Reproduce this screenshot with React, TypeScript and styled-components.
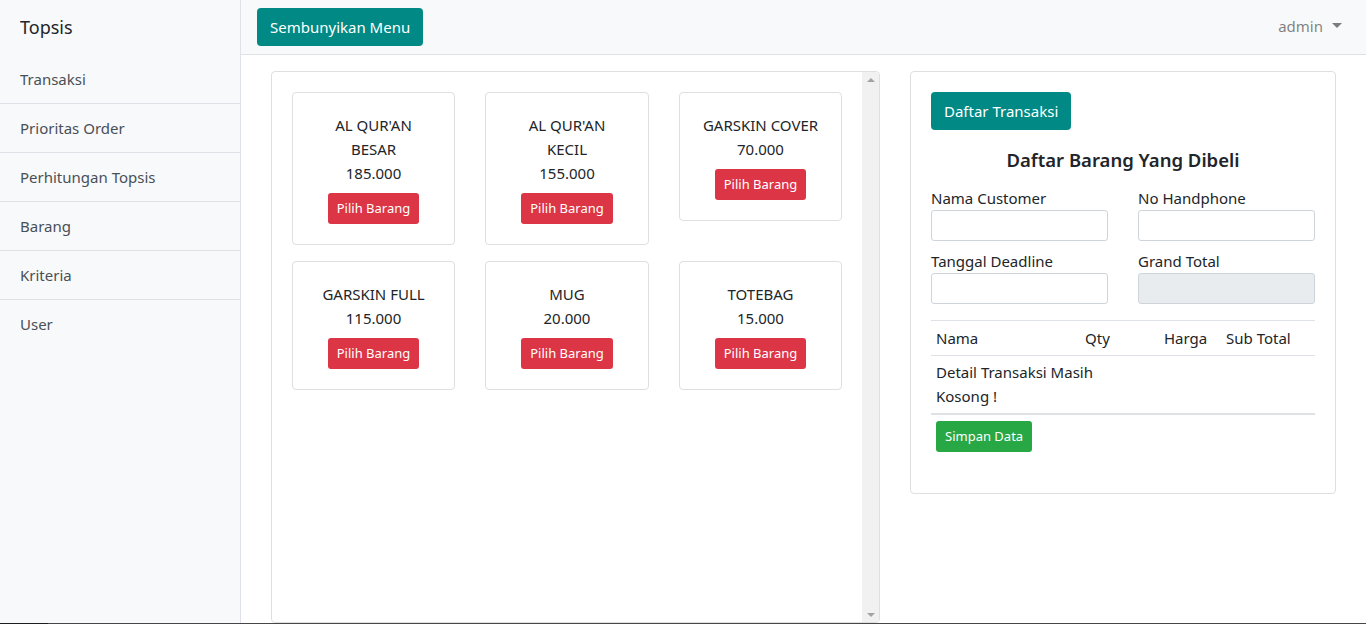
import React from "react";
import styled, { createGlobalStyle } from "styled-components";

const Global = createGlobalStyle`
  html, body { margin: 0; padding: 0; }
  body {
    font-family: "Noto Sans", "Open Sans", sans-serif;
    font-size: 15px;
    line-height: 1.5;
    color: #212529;
    background: #fff;
    overflow: hidden;
  }
  * { box-sizing: border-box; }
`;

const Page = styled.div`
  display: flex;
  flex-direction: column;
  height: 624px;
`;

const Wrapper = styled.div`
  display: flex;
  height: 623px;
`;

const BottomStrip = styled.div`
  height: 1px;
  background: linear-gradient(to right, #1e1e1e 0 48px, #474747 48px);
`;

const Sidebar = styled.aside`
  width: 241px;
  flex: none;
  background: #f8f9fa;
  border-right: 1px solid #dee2e6;
`;

const SidebarHeading = styled.div`
  height: 55px;
  padding: 14px 20px 0;
  font-size: 18px;
  line-height: 27px;
  color: #212529;
`;

const SideItem = styled.div<{ $last?: boolean }>`
  height: 49px;
  padding: 12px 20px;
  border-bottom: ${(p) => (p.$last ? "none" : "1px solid #dee2e6")};
  color: #495057;
  font-size: 15px;
  line-height: 24px;
`;

const Main = styled.div`
  flex: 1;
  display: flex;
  flex-direction: column;
  min-width: 0;
`;

const Navbar = styled.nav`
  height: 55px;
  flex: none;
  display: flex;
  align-items: center;
  justify-content: space-between;
  padding: 0 16px;
  background: #f8f9fa;
  border-bottom: 1px solid #dee2e6;
`;

const Btn = styled.button<{ $variant: "teal" | "red" | "green"; $small?: boolean }>`
  font-family: inherit;
  border: 1px solid transparent;
  border-radius: ${(p) => (p.$small ? "3px" : "4px")};
  color: #fff;
  cursor: pointer;
  font-size: ${(p) => (p.$small ? "13px" : "15px")};
  line-height: ${(p) => (p.$small ? "21px" : "24px")};
  padding: ${(p) => (p.$small ? "4px 8px" : "6px 12px")};
  background: ${(p) =>
    p.$variant === "teal" ? "#008985" : p.$variant === "red" ? "#dc3545" : "#28a745"};
  white-space: nowrap;
`;

const UserMenu = styled.div`
  display: flex;
  align-items: center;
  gap: 9px;
  color: rgba(0, 0, 0, 0.5);
  font-size: 15px;
  padding-right: 8px;
  margin-top: -2px;
`;

const Caret = styled.span`
  display: inline-block;
  width: 0;
  height: 0;
  border-top: 5px solid rgba(0, 0, 0, 0.5);
  border-left: 5px solid transparent;
  border-right: 5px solid transparent;
  margin-top: -2px;
`;

const Content = styled.div`
  flex: 1;
  display: flex;
  gap: 30px;
  padding: 16px 30px 0;
  align-items: flex-start;
  min-height: 0;
`;

const Card = styled.div`
  border: 1px solid #dfdfdf;
  border-radius: 4px;
  background: #fff;
`;

const ProductPanel = styled(Card)`
  width: 609px;
  height: 552px;
  display: flex;
  overflow: hidden;
`;

const ProductGrid = styled.div`
  flex: 1;
  display: grid;
  grid-template-columns: 163px 164px 163px;
  column-gap: 30px;
  row-gap: 16px;
  align-content: start;
  align-items: start;
  padding: 20px 20px;
`;

const ScrollTrack = styled.div`
  width: 17px;
  flex: none;
  background: #f1f1f1;
  display: flex;
  flex-direction: column;
  justify-content: space-between;
  align-items: center;
  padding: 6px 0 5px;
`;

const Arrow = styled.span<{ $down?: boolean }>`
  width: 0;
  height: 0;
  border-left: 4px solid transparent;
  border-right: 4px solid transparent;
  ${(p) =>
    p.$down ? "border-top: 4px solid #a3a3a3;" : "border-bottom: 4px solid #a3a3a3;"}
`;

const ProductCard = styled(Card)`
  padding: 20px 21px;
  text-align: center;
  display: flex;
  flex-direction: column;
  align-items: center;
`;

const ProductName = styled.div`
  font-size: 15px;
  line-height: 24px;
`;

const Price = styled.div`
  font-size: 15px;
  line-height: 24px;
  margin-bottom: 8px;
`;

const FormPanel = styled(Card)`
  width: 426px;
  padding: 20px;
`;

const Heading = styled.h5`
  margin: 18px 0 14px;
  text-align: center;
  font-size: 18.5px;
  line-height: 24px;
  font-weight: 600;
`;

const FormGrid = styled.div`
  display: grid;
  grid-template-columns: 177px 177px;
  column-gap: 30px;
  row-gap: 8px;
`;

const Field = styled.div`
  display: flex;
  flex-direction: column;
`;

const Label = styled.label`
  font-size: 15px;
  line-height: 24px;
`;

const Input = styled.input`
  height: 31px;
  border: 1px solid #ced4da;
  border-radius: 3px;
  background: ${(p) => (p.readOnly ? "#e9ecef" : "#fff")};
  font-family: inherit;
  font-size: 13px;
  padding: 4px 8px;
`;

const Table = styled.table`
  width: 100%;
  margin-top: 16px;
  border-collapse: collapse;
  table-layout: fixed;
  font-size: 15px;
  line-height: 24px;
`;

const Th = styled.th<{ $w: number }>`
  width: ${(p) => p.$w}px;
  text-align: left;
  font-weight: 400;
  padding: 5px;
  border-top: 1px solid #dee2e6;
  border-bottom: 1px solid #dee2e6;
`;

const Td = styled.td`
  padding: 4px 5px 5px;
  border-bottom: 2px solid #dee2e6;
  vertical-align: top;
  white-space: nowrap;
`;

const Footer = styled.div`
  padding: 6px 5px 0;
  margin-bottom: 21px;
`;

const products = [
  { name: "AL QUR'AN BESAR", price: "185.000" },
  { name: "AL QUR'AN KECIL", price: "155.000" },
  { name: "GARSKIN COVER", price: "70.000" },
  { name: "GARSKIN FULL", price: "115.000" },
  { name: "MUG", price: "20.000" },
  { name: "TOTEBAG", price: "15.000" },
];

const menu = ["Transaksi", "Prioritas Order", "Perhitungan Topsis", "Barang", "Kriteria", "User"];

export default function App() {
  return (
    <Page>
      <Global />
      <Wrapper>
        <Sidebar>
          <SidebarHeading>Topsis</SidebarHeading>
          {menu.map((m, i) => (
            <SideItem key={m} $last={i === menu.length - 1}>
              {m}
            </SideItem>
          ))}
        </Sidebar>
        <Main>
          <Navbar>
            <Btn $variant="teal">Sembunyikan Menu</Btn>
            <UserMenu>
              admin <Caret />
            </UserMenu>
          </Navbar>
          <Content>
            <ProductPanel>
              <ProductGrid>
                {products.map((p) => (
                  <ProductCard key={p.name}>
                    <ProductName>{p.name}</ProductName>
                    <Price>{p.price}</Price>
                    <Btn $variant="red" $small>
                      Pilih Barang
                    </Btn>
                  </ProductCard>
                ))}
              </ProductGrid>
              <ScrollTrack>
                <Arrow />
                <Arrow $down />
              </ScrollTrack>
            </ProductPanel>
            <FormPanel>
              <Btn $variant="teal">Daftar Transaksi</Btn>
              <Heading>Daftar Barang Yang Dibeli</Heading>
              <FormGrid>
                <Field>
                  <Label>Nama Customer</Label>
                  <Input />
                </Field>
                <Field>
                  <Label>No Handphone</Label>
                  <Input />
                </Field>
                <Field>
                  <Label>Tanggal Deadline</Label>
                  <Input />
                </Field>
                <Field>
                  <Label>Grand Total</Label>
                  <Input readOnly />
                </Field>
              </FormGrid>
              <Table>
                <thead>
                  <tr>
                    <Th $w={149}>Nama</Th>
                    <Th $w={79}>Qty</Th>
                    <Th $w={62}>Harga</Th>
                    <Th $w={94}>Sub Total</Th>
                  </tr>
                </thead>
                <tbody>
                  <tr>
                    <Td>
                      Detail Transaksi Masih
                      <br />
                      Kosong !
                    </Td>
                    <Td />
                    <Td />
                    <Td />
                  </tr>
                </tbody>
              </Table>
              <Footer>
                <Btn $variant="green" $small>
                  Simpan Data
                </Btn>
              </Footer>
            </FormPanel>
          </Content>
        </Main>
      </Wrapper>
      <BottomStrip />
    </Page>
  );
}
